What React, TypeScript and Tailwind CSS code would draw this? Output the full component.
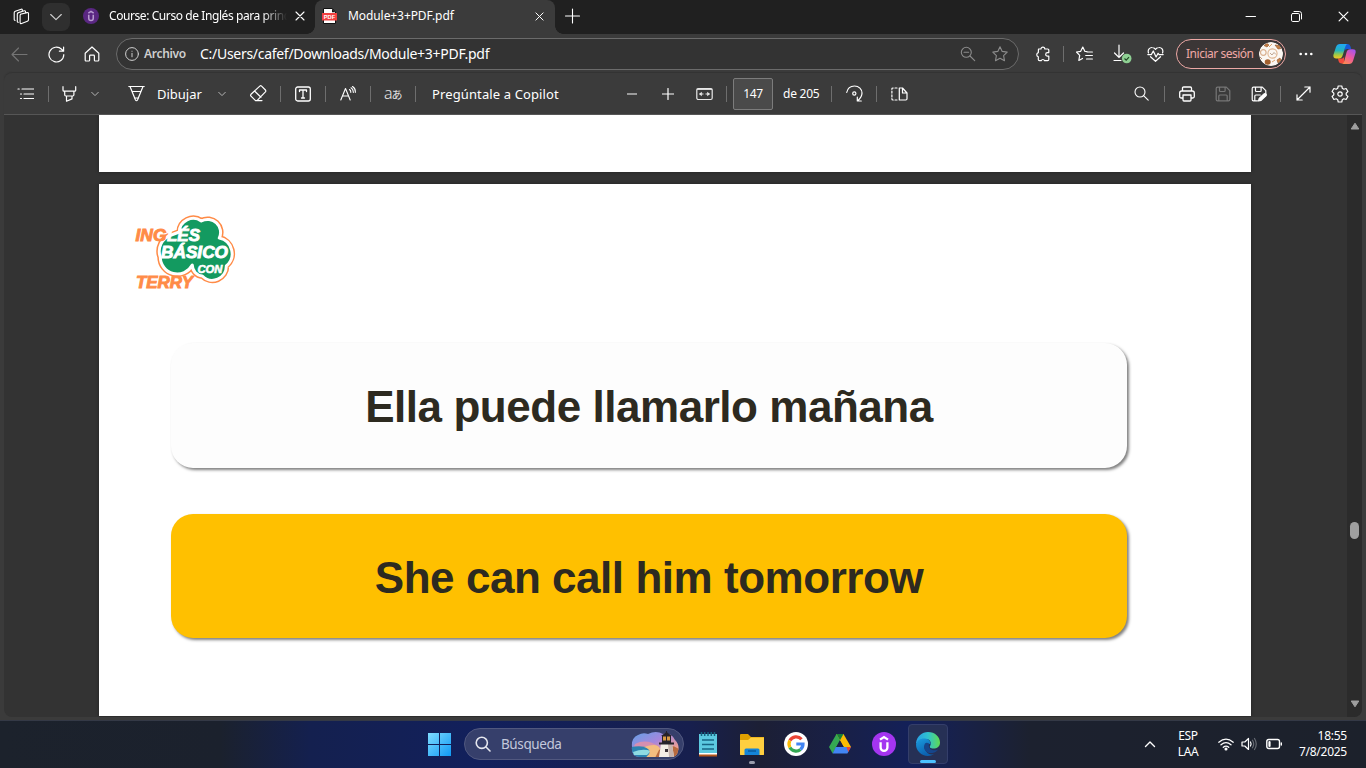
import type { ReactNode } from 'react';

type IconProps = {
  className?: string;
  box?: string;
  sw?: number;
  children: ReactNode;
};

function Icon({ className = '', box = '0 0 16 16', sw = 1.1, children }: IconProps) {
  return (
    <svg
      viewBox={box}
      fill="none"
      stroke="currentColor"
      strokeWidth={sw}
      strokeLinecap="round"
      strokeLinejoin="round"
      className={'shrink-0 ' + className}
    >
      {children}
    </svg>
  );
}

function Divider({ className = '' }: { className?: string }) {
  return <span className={'h-4 w-px shrink-0 bg-[#6e6e6e] ' + className} />;
}

function Close({ className = '' }: { className?: string }) {
  return (
    <Icon className={className} box="0 0 10 10">
      <path d="M1 1l8 8M9 1L1 9" />
    </Icon>
  );
}

function Chevron({ className = '' }: { className?: string }) {
  return (
    <Icon className={'h-2 w-2 text-[#b4b4b4] ' + className} box="0 0 8 8" sw={1}>
      <path d="M.7 2.300L4 5.600l3.300-3.300" />
    </Icon>
  );
}

function UdemyMark({ className = '', bg, fg }: { className?: string; bg: string; fg: string }) {
  return (
    <svg viewBox="0 0 24 24" className={'shrink-0 ' + className}>
      <circle cx="12" cy="12" r="12" fill={bg} />
      <path d="M8 7.600L12 5l4 2.600M8.600 10.300v5.200a3.400 3.400 0 0 0 6.800 0v-5.200" fill="none" stroke={fg} strokeWidth="2.300" />
    </svg>
  );
}

function PdfMark() {
  return (
    <svg viewBox="0 0 16 16" className="ml-[7px] h-4 w-4 shrink-0">
      <path d="M1.500.5h9L13.500 4v11.500h-12z" fill="#fff" stroke="#111" />
      <path d="M10 .5v3.700h3.500z" fill="#111" />
      <rect x="0" y="5" width="15" height="7.500" fill="#f23f3f" />
      <text x="7.500" y="10.900" textAnchor="middle" fontSize="5.700" fontWeight="700" fill="#fff" fontFamily="Liberation Sans, sans-serif">PDF</text>
    </svg>
  );
}

function TabStrip() {
  return (
    <div className="flex h-[34px] shrink-0 items-start bg-[#202020] text-white">
      <Icon className="ml-[13px] mt-2 h-[17px] w-[17px]" box="0 0 17 17" sw={1.100}>
        <path d="M7.400 6.200l6.600-1.600q1.500-.3 1.500 1.100v6.100q0 1.100-1.100 1.500l-5.800 2.200q-1.500.4-1.500-1V7.600q0-1 .9-1.300z" />
        <path d="M12.500 4.600V3.700q0-1.200-1.200-.9L5.500 4.600q-1.200.4-1.200 1.500v7.200q0 1 1 .9M9.300 3V2q0-1.100-1.100-.8L2.300 3.300q-1.100.4-1.100 1.500v6.700q0 .9.800.9" />
      </Icon>
      <div className="ml-3 mt-[3px] flex h-7 w-7 shrink-0 items-center justify-center rounded-lg bg-[#2f2f2f]">
        <Icon className="h-3 w-3 text-[#d0d0d0]" box="0 0 12 12" sw={1.100}>
          <path d="M.7 3.500L6 8.700l5.300-5.200" />
        </Icon>
      </div>
      <UdemyMark className="ml-[13px] mt-2 h-4 w-4" bg="#5a2782" fg="#b79bd0" />
      <div className="ml-[10px] mt-[6px] h-5 w-[178px] shrink-0 overflow-hidden whitespace-nowrap text-[12px] leading-5 tracking-[-0.42px] [mask-image:linear-gradient(90deg,#000_86%,transparent)]">
        Course: Curso de Inglés para princi
      </div>
      <Close className="ml-[8px] mt-[11px] h-[10px] w-[10px]" />
      <div className="flex h-[34px] w-[10px] shrink-0 items-end">
        <span className="ml-auto h-2 w-2 bg-[radial-gradient(circle_at_0_0,transparent_7.5px,#3b3b3b_8px)]" />
      </div>
      <div className="flex h-[34px] w-[240px] shrink-0 items-start rounded-t-lg bg-[#3b3b3b]">
        <div className="mt-2 flex"><PdfMark /></div>
        <span className="ml-[10px] mt-[6px] w-[140px] shrink-0 whitespace-nowrap text-[12px] leading-5 tracking-[-0.08px]">Module+3+PDF.pdf</span>
        <Close className="ml-[47px] mt-3 h-[9px] w-[9px]" />
      </div>
      <div className="flex h-[34px] w-2 shrink-0 items-end">
        <span className="h-2 w-2 bg-[radial-gradient(circle_at_100%_0,transparent_7.5px,#3b3b3b_8px)]" />
      </div>
      <Icon className="ml-[2px] mt-2 h-4 w-4" sw={1.100}>
        <path d="M7.500 1v14M.5 8h14" />
      </Icon>
      <div className="ml-auto mt-[11px] flex">
        <Icon className="h-[11px] w-[11px]" box="0 0 11 11" sw={1}>
          <path d="M1 5.500h9.500" />
        </Icon>
        <Icon className="ml-[35px] h-[11px] w-[11px]" box="0 0 11 11" sw={1}>
          <rect x=".5" y="2.500" width="8" height="8" rx="1.300" />
          <path d="M3 .5h5.300q2.200 0 2.200 2.200V8" />
        </Icon>
        <Close className="ml-[36px] mr-[17px] h-[11px] w-[11px]" />
      </div>
    </div>
  );
}

function CopilotMark() {
  return (
    <svg viewBox="0 0 23 22" className="ml-[20px] h-[22px] w-[23px] shrink-0">
      <defs>
        <linearGradient id="cpA" x1="0" y1="0" x2="0" y2="1">
          <stop offset="0" stopColor="#20a6f5" />
          <stop offset=".45" stopColor="#23b4bd" />
          <stop offset=".75" stopColor="#a5c83f" />
          <stop offset="1" stopColor="#f4c526" />
        </linearGradient>
        <linearGradient id="cpB" x1="0.8" y1="0" x2="0.2" y2="1">
          <stop offset="0" stopColor="#a453ee" />
          <stop offset=".5" stopColor="#ef599c" />
          <stop offset="1" stopColor="#fb8b4d" />
        </linearGradient>
      </defs>
      <path d="M12 1h2.500q2.200 0 2.900 2.300L18.200 6h-4q-2 0-2.700 2z" fill="#1759d8" />
      <path d="M11 20.500H8.500q-2.200 0-2.900-2.300L5 15.500h4q1.500 0 2.200-2z" fill="#f24a3d" />
      <path d="M7 1h7.500q-1.500.3-2.200 2.800L9.800 12q-.9 3.500-4 3.500H3.200Q-.3 15.500.5 11.500L3 4Q4 1 7 1z" fill="url(#cpA)" />
      <path d="M16 21H8.800q1.700-.4 2.400-2.800L13.500 9.500q.9-3.200 3.800-3.200h2.500q3.600 0 2.700 3.800L20 18q-1 3-4 3z" fill="url(#cpB)" />
    </svg>
  );
}

function Avatar() {
  return (
    <svg viewBox="0 0 24 24" className="ml-auto mr-[2px] h-6 w-6 shrink-0">
      <defs><clipPath id="av"><circle cx="12" cy="12" r="12" /></clipPath></defs>
      <g clipPath="url(#av)" fill="none">
        <circle cx="12" cy="12" r="12" fill="#fbf7f2" />
        <circle cx="4.300" cy="10.500" r="2.800" stroke="#d9b190" strokeWidth="1.200" />
        <circle cx="13.500" cy="11.500" r="4.600" stroke="#dfb48f" strokeWidth="1.100" />
        <path d="M11 11l2 2 2-2.500 2 2" stroke="#b99c86" strokeWidth=".9" />
        <ellipse cx="8.700" cy="20" rx="3" ry="2.800" fill="#a35f2d" />
        <path d="M5 3.500l3-2 2 1.500-2 2zM16 3l4 .5 2 3-3 .5zM18 18l3-2 1 2-3 3zM1 15l2 2" fill="#c57f45" stroke="#8e5328" strokeWidth=".6" />
        <path d="M13 20l3-2M10 5l3-3" stroke="#dba06b" />
      </g>
    </svg>
  );
}

function AddressRow() {
  return (
    <div className="flex h-[39px] shrink-0 items-center bg-[#3b3b3b] pt-px text-white">
      <Icon className="ml-[11px] h-[17px] w-[17px] text-[#747474]" box="0 0 17 17">
        <path d="M16 8.500H1.200M7.500 2L1 8.500 7.500 15" />
      </Icon>
      <Icon className="ml-[20px] h-[17px] w-[17px]" box="0 0 17 17" sw={1.200}>
        <path d="M15.800 8.700A7.400 7.400 0 1 1 13.600 3.300l1.700 1.600M15.600 1v4.200h-4.200" />
      </Icon>
      <Icon className="ml-[19px] h-4 w-4" sw={1.200}>
        <path d="M1.200 7.200L8 1l6.800 6.200v6.700q0 1.100-1.100 1.100h-2.500q-.8 0-.8-.8V10q0-.8-.8-.8H6.400q-.8 0-.8.8v4.200q0 .8-.8.8H2.300q-1.100 0-1.100-1.100z" />
      </Icon>
      <div className="ml-4 flex h-8 w-[903px] shrink-0 items-center rounded-full border border-[#6b6b6b] bg-[#333333]">
        <Icon className="ml-[8px] h-[14px] w-[14px] text-[#d0d0d0]" box="0 0 14 14" sw={1}>
          <circle cx="7" cy="7" r="6.400" />
          <path d="M7 6.300v3.500M7 4.200v.1" />
        </Icon>
        <span className="ml-[5px] w-[56px] shrink-0 whitespace-nowrap text-[12px] font-semibold leading-5 tracking-[-0.3px] text-[#cfcfcf]">Archivo</span>
        <span className="shrink-0 whitespace-nowrap text-[14px] leading-5 tracking-[-0.29px]">C:/Users/cafef/Downloads/Module+3+PDF.pdf</span>
        <div className="ml-auto flex items-center text-[#8c8c8c]">
          <Icon className="h-4 w-4">
            <circle cx="6.300" cy="6.300" r="5" />
            <path d="M10 10l4.700 4.700M4 6.300h4.600" />
          </Icon>
          <Icon className="ml-4 mr-[10px] h-4 w-4">
            <path d="M8 .8l2.200 4.600 5 .7-3.600 3.500.9 5.100L8 12.300l-4.500 2.400.9-5.100L.8 6.100l5-.7z" />
          </Icon>
        </div>
      </div>
      <Icon className="ml-4 h-4 w-4" sw={1.200}>
        <path d="M3.500 3H6a1.900 1.900 0 0 1 3.800 0h3q1 0 1 1v2.600h-1.300a1.700 1.700 0 0 0 0 3.600h1.300v3.300q0 1.200-1.200 1.200H9.600a1.800 1.800 0 0 0-3.400 0H4.500q-1.200 0-1.200-1.200v-2.700a2.200 2.200 0 0 1 0-4.200z" />
      </Icon>
      <Divider className="ml-[12px]" />
      <Icon className="ml-[12px] h-[17px] w-[17px]" box="0 0 17 17" sw={1.200}>
        <path d="M11 5.500l-2.200-.2L6.800 1 4.700 5.300l-4.200.7 3.200 3.300-.9 5.200 3.700-2M11 6h5.400M9.700 9.500h6.700M10.500 13h5.900" />
      </Icon>
      <svg viewBox="0 0 19 20" fill="none" className="ml-[20px] h-5 w-[19px] shrink-0">
        <path d="M6 1v12M1.500 9L6 13.500 10.500 9M1 16.500h7" stroke="#fff" strokeWidth="1.200" strokeLinecap="round" />
        <circle cx="13.700" cy="14.500" r="4.800" fill="#8ed093" />
        <path d="M11.500 14.500l1.700 1.700 2.800-3" stroke="#1e4423" strokeWidth="1.100" />
      </svg>
      <Icon className="ml-[15px] h-[17px] w-[17px]" box="0 0 17 17" sw={1.200}>
        <path d="M1.500 7C.3 3.500 3 1.300 5.200 1.500q2 .1 3.300 1.900Q9.800 1.600 11.800 1.500C14.500 1.300 16.700 3.800 15.500 7M3.500 10.700l5 4.600 5-4.600M.8 8.600h3.500L6.300 5l2.800 6 2-3.700 1 1.300h4.100" />
      </Icon>
      <div className="ml-[12px] flex h-[30px] w-[110px] shrink-0 items-center rounded-full border border-[#eda8a5] bg-[#3b3636]">
        <span className="ml-[9px] whitespace-nowrap text-[12px] leading-5 tracking-[-0.48px] text-[#f0a8a6]">Iniciar sesión</span>
        <Avatar />
      </div>
      <svg viewBox="0 0 14 4" className="ml-[13px] h-1 w-[14px] shrink-0" fill="#fff">
        <circle cx="1.700" cy="2" r="1.300" /><circle cx="7" cy="2" r="1.300" /><circle cx="12.300" cy="2" r="1.300" />
      </svg>
      <CopilotMark />
    </div>
  );
}

function PdfToolbar() {
  return (
    <div className="flex h-[42px] shrink-0 items-center rounded-t-lg border-b border-[#565656] bg-[#3b3b3b] text-[13px] text-white shadow-[0_-1px_1px_#333]">
      <Icon className="ml-[13px] h-4 w-[17px]" box="0 0 17 16" sw={1.200}>
        <path d="M5 3h11.500M7 8h9.500M7 12.500h9.500M1 3h1.200M3.500 8h1M3.500 12.500h1" />
      </Icon>
      <Divider className="ml-[14px]" />
      <Icon className="ml-[13px] h-4 w-4" sw={1.200}>
        <path d="M1 .7v3.500q0 1 1 1h10.700q1 0 1-1V.7M2.700 5.500v3.300q0 1.200 1.200 1.200h6.800q1.200 0 1.200-1.200V5.500M4.500 10v5.200l5.500-2.300V10" />
      </Icon>
      <Chevron className="ml-[13px]" />
      <Icon className="ml-[29px] h-[17px] w-[17px]" box="0 0 17 17" sw={1.200}>
        <path d="M.8 1.500h15.400M2 1.500l5.300 13q1.200 2.500 2.400 0l5.300-13M4 6.500h9M6.500 13h4" />
      </Icon>
      <span className="ml-[12px] w-[61px] shrink-0 whitespace-nowrap leading-5">Dibujar</span>
      <Chevron />
      <Icon className="ml-[24px] h-[17px] w-[17px]" box="0 0 17 17" sw={1.200}>
        <path d="M1 9.300L9.800 1.100q.9-.8 1.800 0l3.800 3.900q.8.900 0 1.800L7 15.600H5.500L1 11.100q-.9-.9 0-1.800zM4.500 6l6.500 6.200M7 15.600h5" />
      </Icon>
      <Divider className="ml-[13px]" />
      <Icon className="ml-[14px] h-4 w-4" sw={1.300}>
        <rect x=".7" y="1" width="14.600" height="14" rx="2" />
        <path d="M4.500 5.500V4h7v1.500M8 4v8M6.500 12h3" />
      </Icon>
      <Divider className="ml-[14px]" />
      <Icon className="ml-[14px] h-4 w-4" sw={1.100}>
        <path d="M.8 14L5.500 2.500 10.200 14M2.500 10h6M9.500 3.500q1.500 1.200 1.300 3M11 1.800q2.500 1.600 2.300 4.700M12.500.5q3.200 2 2.800 6" />
      </Icon>
      <Divider className="ml-[14px]" />
      <span className="ml-[13px] flex w-[20px] shrink-0 items-center whitespace-nowrap text-[#e4e4e4]">
        <span className="-mt-[2px] text-[16px] font-light leading-5">a</span>
        <span className="-ml-px font-['Noto_Sans_CJK_JP',sans-serif] text-[11px] leading-5">あ</span>
      </span>
      <Divider className="ml-[11px]" />
      <span className="ml-[16px] w-[195px] shrink-0 whitespace-nowrap leading-5 tracking-[0.12px]">Pregúntale a Copilot</span>
      <span className="h-[2px] w-[10px] shrink-0 bg-[#9a9a9a]" />
      <Icon className="ml-[25px] h-[12px] w-[12px]" box="0 0 12 12" sw={1.200}>
        <path d="M6 .5v11M.5 6h11" />
      </Icon>
      <svg viewBox="0 0 17 14" fill="none" className="ml-[22px] h-[14px] w-[17px] shrink-0" stroke="#e8e8e8" strokeWidth="1.200">
        <rect x=".8" y="1.500" width="15.400" height="11" rx="1.500" />
        <path d="M.8 2.300h15.400" />
        <path d="M7.500 7H3.500M9.500 7h4" />
        <path d="M5.800 4.700L3 7l2.800 2.300zM11.200 4.700L14 7l-2.800 2.300z" fill="#e8e8e8" stroke="none" />
      </svg>
      <Divider className="ml-[13px]" />
      <span className="ml-[6px] flex h-8 w-10 shrink-0 items-center justify-center rounded-[2px] border border-[#7c7c7c] bg-[#4a4a4a] text-[12px] tracking-[-0.3px]">147</span>
      <span className="ml-[10px] w-[48px] shrink-0 whitespace-nowrap text-[12px] leading-5 tracking-[-0.25px]">de 205</span>
      <Divider />
      <Icon className="ml-[14px] h-[17px] w-[17px]" box="0 0 17 17" sw={1.200}>
        <path d="M.7 7.500C1.600 3 5 1 8.500 1c4.500 0 7.500 3.300 7.500 7 0 3.200-1.800 5.500-4 7.500M11.300 12.200V16h4" />
        <circle cx="8.300" cy="8.500" r="1.600" />
      </Icon>
      <Divider className="ml-[13px]" />
      <Icon className="ml-[14px] h-4 w-[17px]" box="0 0 17 16" sw={1.200}>
        <path d="M8.300 2v12h6.500q1.200 0 1.200-1.200V7L11.500 2zM11.500 2v5H16" />
        <path d="M6 2H2Q.9 2 .9 3v10q0 1 1.100 1h4" strokeDasharray="2 1.800" />
      </Icon>
      <div className="ml-auto flex shrink-0 items-center">
        <Icon className="h-[15px] w-[15px]" box="0 0 15 15">
          <circle cx="6" cy="6" r="5" /><path d="M9.600 9.600l4.600 4.600" />
        </Icon>
        <Divider className="ml-[15px]" />
        <Icon className="ml-[14px] h-4 w-4" sw={1.300}>
          <path d="M3.500 5V2.200q0-1.200 1.200-1.200h6.600q1.200 0 1.200 1.200V5M4 12H2.300Q.7 12 .7 10.500V7q0-2 2-2h10.600q2 0 2 2v3.500q0 1.500-1.600 1.500H12M4 9h8v5q0 1-1 1H5q-1 0-1-1z" />
        </Icon>
        <Icon className="ml-[20px] h-4 w-4 text-[#777]" sw={1.200}>
          <path d="M1.200 2.500q0-1.300 1.300-1.300h8.800l3.500 3.500v8.800q0 1.300-1.300 1.300h-11q-1.300 0-1.300-1.300zM4.500 1.200v3.500q0 .8.800.8h4q.8 0 .8-.8V1.200M3.800 14.800V10q0-1 1-1h6.400q1 0 1 1v4.800" />
        </Icon>
        <Icon className="ml-[20px] h-4 w-4" sw={1.200}>
          <path d="M6.500 14.800h-4q-1.300 0-1.300-1.300v-11q0-1.300 1.300-1.300h8.800l3.500 3.500v2.800M4.500 1.200v3.500q0 .8.800.8h4q.8 0 .8-.8V1.200M3.800 14.800V10q0-1 1-1h4.500" />
          <path d="M7.500 15l.7-2.500 4.800-4.600q1-.7 1.900.1t0 1.900l-4.800 4.500z" fill="currentColor" />
        </Icon>
        <Divider className="ml-[13px]" />
        <Icon className="ml-[15px] h-[15px] w-[15px]" box="0 0 15 15" sw={1.200}>
          <path d="M1 14L14 1M8.800 1H14v5.200M1 8.800V14h5.200" />
        </Icon>
        <Icon className="ml-[20px] mr-[13px] h-[18px] w-[18px]" box="0 0 18 18" sw={1.200}>
          <path d="M7.200 1h3.600l.5 2.300 1.500.9 2.300-.7 1.800 3-1.700 1.600v1.800l1.700 1.600-1.800 3-2.300-.7-1.500.9-.5 2.300H7.200l-.5-2.300-1.500-.9-2.300.7-1.800-3 1.700-1.600V8.100L1.100 6.500l1.800-3 2.300.7 1.500-.9z" />
          <circle cx="9" cy="9" r="2.200" />
        </Icon>
      </div>
    </div>
  );
}

function CourseLogo() {
  const cloud =
    'M45 18a14 14 0 0 1 22-11a13 13 0 0 1 18 17a16 16 0 0 1 7 28a14 14 0 0 1-24 10a11 11 0 0 1-10-11a17 17 0 0 1-32-8a17 17 0 0 1 11-22z';
  return (
    <svg viewBox="0 0 102 78" className="ml-[35px] mt-[29px] h-[78px] w-[102px] shrink-0">
      <g transform="translate(.3 1)" strokeLinejoin="round">
        <path d={cloud} fill="#139a60" stroke="#ff8b47" strokeWidth="6" />
        <path d={cloud} fill="#139a60" stroke="#fff" strokeWidth="3" />
      </g>
      <g fontFamily="Liberation Sans, Arial, sans-serif" fontWeight="700" fontStyle="italic" strokeWidth=".9">
        <text x="1.500" y="28.300" fontSize="17" textLength="31" lengthAdjust="spacingAndGlyphs" fill="#ff8b47" stroke="#ff8b47">ING</text>
        <text x="33" y="28.300" fontSize="17" textLength="33" lengthAdjust="spacingAndGlyphs" fill="#fff" stroke="#fff">LÉS</text>
        <text x="27" y="45" fontSize="17" textLength="67" lengthAdjust="spacingAndGlyphs" fill="#fff" stroke="#fff">BÁSICO</text>
        <text x="63.500" y="60" fontSize="11.500" textLength="25" lengthAdjust="spacingAndGlyphs" fill="#fff" stroke="#fff" strokeWidth=".6">CON</text>
        <text x="2" y="75" fontSize="16" textLength="57" lengthAdjust="spacingAndGlyphs" fill="#ff8b47" stroke="#ff8b47">TERRY</text>
      </g>
    </svg>
  );
}

function Viewer() {
  return (
    <div className="flex h-[602px] shrink-0 overflow-hidden rounded-b-lg bg-[#333333]">
      <div className="ml-[95px] flex w-[1152px] shrink-0 flex-col">
        <div className="h-[57px] shrink-0 bg-white shadow-[0_0_3px_#222]" />
        <div className="mt-3 flex h-[532px] shrink-0 flex-col bg-white shadow-[0_0_3px_#222]">
          <CourseLogo />
          <div className="ml-[72px] mt-[52px] flex h-[125px] w-[956px] shrink-0 items-center justify-center rounded-[22px] bg-[#fdfdfd] pt-[3px] shadow-[2px_2px_3px_rgba(0,0,0,0.5)]">
            <span className="whitespace-nowrap font-['Liberation_Sans',sans-serif] text-[44px] font-bold tracking-[-0.46px] text-[#2d2a20]">Ella puede llamarlo mañana</span>
          </div>
          <div className="ml-[72px] mt-[46px] flex h-[124px] w-[956px] shrink-0 items-center justify-center rounded-[22px] bg-[#ffc000] pt-[3px] shadow-[2px_2px_3px_rgba(0,0,0,0.5)]">
            <span className="whitespace-nowrap font-['Liberation_Sans',sans-serif] text-[44px] font-bold tracking-[-0.46px] text-[#2d2a20]">She can call him tomorrow</span>
          </div>
        </div>
      </div>
      <div className="ml-auto flex w-[15px] shrink-0 flex-col items-center bg-[#2b2b2b]">
        <svg viewBox="0 0 10 8" className="mt-[7px] h-2 w-[10px] shrink-0"><path d="M5 1.200L8.800 7H1.200z" fill="#9f9f9f" stroke="#9f9f9f" strokeLinejoin="round" /></svg>
        <span className="mt-[392px] h-[17px] w-[9px] shrink-0 rounded-full bg-[#9f9f9f]" />
        <svg viewBox="0 0 10 8" className="mb-[9px] mt-auto h-2 w-[10px] shrink-0"><path d="M5 6.800L8.800 1H1.200z" fill="#9f9f9f" stroke="#9f9f9f" strokeLinejoin="round" /></svg>
      </div>
    </div>
  );
}

function Lighthouse() {
  return (
    <svg viewBox="0 0 48 27" className="ml-auto mr-[4px] h-[27px] w-12 shrink-0">
      <defs>
        <linearGradient id="sky" x1="0" y1="0" x2="1" y2="1">
          <stop offset="0" stopColor="#5aa4e8" /><stop offset=".45" stopColor="#a786dc" /><stop offset=".8" stopColor="#f0a08f" />
        </linearGradient>
        <clipPath id="lh"><path d="M1 16Q0 7 7 4q5-3 10-1 8-4 15 0 8-2 12 6 5 5 3 11-1 6-7 6H8q-8-1-7-10z" /></clipPath>
      </defs>
      <g clipPath="url(#lh)">
        <rect width="48" height="27" fill="url(#sky)" />
        <path d="M4 13q12-6 24 3l-8 2H2z" fill="#d58fb0" />
        <path d="M0 16q12-2 23 2l2 9H0z" fill="#2b83b0" />
        <path d="M2 21q10-4 18-1l-4 4H3z" fill="#8fdbe2" />
        <path d="M13 16q14-5 16 2l-3 9H14q10-7-1-11z" fill="#f3bd7f" />
        <path d="M28 19q10-8 20-1v9H24z" fill="#b86a3e" />
      </g>
      <path d="M30 13h11l2 13H28z" fill="#f4ede5" /><path d="M37 13h4l2 13h-5z" fill="#c7b4ae" />
      <path d="M28 11.500h15v2H28zM30 5h11l-5.500-4zM31 10h9v2h-9z" fill="#26222a" />
      <path d="M31.500 5h8v5h-8z" fill="#d99a45" stroke="#26222a" /><path d="M35.500 0v10" stroke="#26222a" />
      <path d="M34 18h3v3h-3z" fill="#3c3238" />
    </svg>
  );
}

function Taskbar() {
  return (
    <div className="flex h-12 shrink-0 items-center border-t border-[#343946] bg-[linear-gradient(90deg,#1c222c_0,#1b212d_220px,#14204f_310px,#12205c_480px,#171f4e_690px,#1c1f35_760px,#182049_850px,#13205a_915px,#182149_960px,#1c212f_1030px,#1c212b_1366px)] pb-px text-white">
      <svg viewBox="0 0 23 23" className="ml-[428px] h-[23px] w-[23px] shrink-0">
        <defs><linearGradient id="win" x1="0" y1="0" x2="1" y2="1"><stop offset="0" stopColor="#7fdcff" /><stop offset="1" stopColor="#0f9af5" /></linearGradient></defs>
        <path d="M0 0h11v11H0zM12 0h11v11H12zM0 12h11v11H0zM12 12h11v11H12z" fill="url(#win)" />
      </svg>
      <div className="ml-[13px] flex h-8 w-[220px] shrink-0 items-center rounded-full border border-[#51587f] bg-[#363f6b]">
        <Icon className="ml-[10px] h-4 w-4 text-[#e5e6ee]" sw={1.600}>
          <circle cx="6.800" cy="6.800" r="5.600" /><path d="M11 11l4 4" />
        </Icon>
        <span className="ml-[10px] whitespace-nowrap text-[13.5px] leading-5 tracking-[-0.4px] text-[#c3c8dc]">Búsqueda</span>
        <Lighthouse />
      </div>
      <svg viewBox="0 0 20 25" className="ml-[14px] h-[25px] w-5 shrink-0">
        <path d="M1 20h18v4.500H1z" fill="#b2561c" /><path d="M1 20h18v2.500H1z" fill="#fff" />
        <path d="M1 2h18v19H1z" fill="#5cc9e0" />
        <path d="M3.500 0v4M6.700 0v4M10 0v4M13.300 0v4M16.500 0v4" stroke="#16637e" strokeWidth="1.500" />
        <path d="M4 8h12M4 12.500h12M4 17h12" stroke="#176584" strokeWidth="1.600" />
      </svg>
      <div className="ml-[21px] flex h-[47px] w-[26px] shrink-0 flex-col items-center">
        <svg viewBox="0 0 26 24" className="mt-[12px] h-6 w-[26px] shrink-0">
          <path d="M1 2q0-1 1-1h7l3 3h13v18H1z" fill="#e0a000" />
          <path d="M1 7h8l3-2.500h13V21q0 1-1 1H2q-1 0-1-1z" fill="#ffcf40" />
          <path d="M5.500 22v-5q0-1.500 1.500-1.500h12q1.500 0 1.500 1.500v5z" fill="#1484d8" /><path d="M9 18h8" stroke="#0a5b9d" strokeWidth="1.500" />
        </svg>
        <span className="mt-[4px] h-[3px] w-[6px] rounded-full bg-[#9a9dac]" />
      </div>
      <svg viewBox="0 0 24 24" className="ml-[19px] h-6 w-6 shrink-0">
        <circle cx="12" cy="12" r="12" fill="#fff" />
        <g fill="none" strokeWidth="3.200">
          <path d="M17.500 7.300A7 7 0 0 0 5.900 8.600" stroke="#ea4335" /><path d="M5.900 8.600a7 7 0 0 0 0 6.800" stroke="#fbbc05" />
          <path d="M5.900 15.400a7 7 0 0 0 10.600 2" stroke="#34a853" /><path d="M16.500 17.400A7 7 0 0 0 19 12h-6.700" stroke="#4285f4" />
        </g>
      </svg>
      <svg viewBox="0 0 22 20" className="ml-[21px] h-5 w-[22px] shrink-0">
        <path d="M7.500 0h7l-3.800 6.500L3.700 19.500 0 13z" fill="#34a853" /><path d="M7.500 0h7L22 13h-7.300z" fill="#fbbc04" />
        <path d="M6.800 13H22l-3.600 6.500H3.700z" fill="#4285f4" /><path d="M17.500 13H22l-2.800 5z" fill="#ea4335" /><path d="M7.500 0h7L11 6.300z" fill="#188038" />
        <path d="M11 7l3.700 6H7.300z" fill="#1a2047" />
      </svg>
      <UdemyMark className="ml-[21px] h-6 w-6" bg="#a435f0" fg="#fff" />
      <div className="ml-[12px] flex h-10 w-10 shrink-0 flex-col items-center rounded-[4px] border border-[#343e6a] bg-[#263055]">
        <svg viewBox="0 0 24 24" className="mt-[7px] h-6 w-6 shrink-0">
          <defs>
            <linearGradient id="edA" x1="0" y1=".3" x2="1" y2=".3"><stop offset="0" stopColor="#289fe5" /><stop offset=".5" stopColor="#2fc2cf" /><stop offset="1" stopColor="#60da50" /></linearGradient>
            <linearGradient id="edB" x1="0" y1="0" x2=".5" y2="1"><stop offset="0" stopColor="#1b9de0" /><stop offset="1" stopColor="#0b5fae" /></linearGradient>
          </defs>
          <path d="M0 11C1 4 6 0 12 0c7 0 12 5 12 10.500 0 4-3 6-6.500 6-3.300 0-4.300-1.300-3.300-2.700C16 10.500 14 7 9.500 7 5 7 2 9 0 12z" fill="url(#edA)" />
          <path d="M0 12.500C1 8 5 6 9 6.500c3.500.3 6 3 5.500 6-4-3-7 1-5.500 5s6 6 9 4.500C14 25 7 24.500 3.500 20.500Q0 17 0 12.500z" fill="url(#edB)" />
          <path d="M9 11.500c-3 5 1 10.500 7.500 9.500 2.500-.5 4.500-2 5.800-3.500-6 2.500-10.500-1-9.300-5.500Q11 10 9 11.500z" fill="#16468c" />
        </svg>
        <span className="mt-[4px] h-[3px] w-4 rounded-full bg-[#4cc2ff]" />
      </div>
      <div className="ml-auto flex shrink-0 items-center">
        <Icon className="h-3 w-3" box="0 0 12 12" sw={1.400}><path d="M1.500 8.500L6 4l4.500 4.500" /></Icon>
        <div className="ml-[16px] w-8 shrink-0 text-center text-[12px] leading-4 tracking-[-0.4px]"><div>ESP</div><div>LAA</div></div>
        <Icon className="ml-[14px] h-4 w-4" sw={1.300}>
          <path d="M.8 6.200q7.200-6 14.400 0M3 8.800q5-4.200 10 0M5.300 11.300q2.700-2.200 5.400 0" /><circle cx="8" cy="13" r=".9" fill="currentColor" />
        </Icon>
        <Icon className="ml-[7px] h-4 w-4" sw={1.200}>
          <path d="M1 6h2.800L7.500 2.500v11L3.800 10H1zM9.500 6q1.200 2 0 4" /><path d="M11.500 4.200q2.400 3.800 0 7.600M13.500 2.500q3.500 5.500 0 11" stroke="#666a72" />
        </Icon>
        <Icon className="ml-[9px] h-4 w-4" sw={1.400}>
          <rect x=".8" y="3.500" width="12.700" height="9" rx="2" /><path d="M15.300 7v2" /><path d="M3.500 6v4" strokeWidth="2.200" />
        </Icon>
        <div className="ml-[8px] mr-[19px] w-[57px] shrink-0 text-right text-[12px] leading-4 tracking-[-0.25px]"><div>18:55</div><div>7/8/2025</div></div>
      </div>
    </div>
  );
}

export default function App() {
  return (
    <div className="flex h-[768px] w-[1366px] flex-col overflow-hidden bg-[#3b3b3b] font-['Noto_Sans',sans-serif]">
      <TabStrip />
      <AddressRow />
      <div className="mx-1 flex h-[647px] shrink-0 flex-col">
        <PdfToolbar />
        <Viewer />
      </div>
      <Taskbar />
    </div>
  );
}
